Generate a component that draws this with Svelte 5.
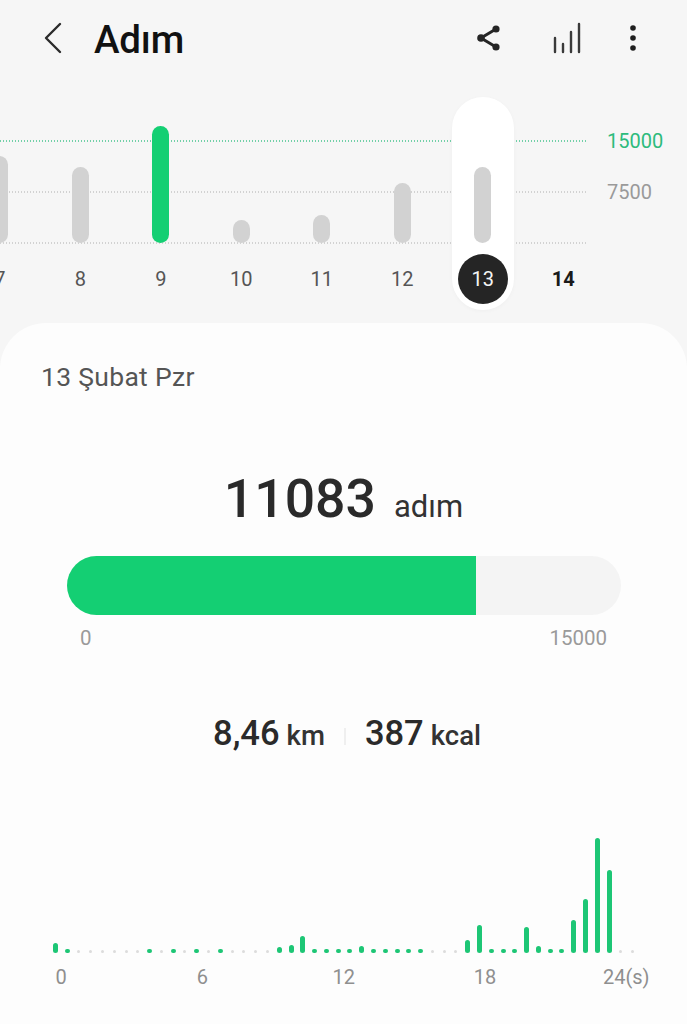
<script lang="ts">
	const days = [
		{ label: 7, height: 87 },
		{ label: 8, height: 76 },
		{ label: 9, height: 117, goal: true },
		{ label: 10, height: 23 },
		{ label: 11, height: 28 },
		{ label: 12, height: 60 },
		{ label: 13, height: 76, selected: true },
		{ label: 14, height: 0, today: true }
	];

	// half-hour bins, 0 means nothing was recorded
	const tall: Record<number, number> = {
		0: 10, 19: 6, 20: 8, 21: 17, 26: 7, 35: 13, 36: 28, 40: 26, 41: 7,
		44: 33, 45: 54, 46: 115, 47: 83
	};
	const small = [1, 8, 10, 12, 14, 22, 23, 24, 25, 27, 28, 29, 30, 31, 37, 38, 39, 42, 43];
	const bins = Array.from({ length: 50 }, (_, i) => tall[i] ?? (small.includes(i) ? 4 : 0));

	const hours = ['0', '6', '12', '18', '24(s)'];
</script>

<div class="page">
	<header class="top">
		<svg class="back" width="20" height="32" viewBox="0 0 20 32" fill="none" stroke="#2b2b2b" stroke-width="2.4" stroke-linecap="round" stroke-linejoin="round">
			<path d="M17 2 3 16l14 14" />
		</svg>
		<h1>Adım</h1>
		<div class="actions">
			<svg class="share" width="28" height="28" viewBox="0 0 28 28" fill="#252525" stroke="#252525">
				<path d="M21 5 6 14l15 9" fill="none" stroke-width="3" />
				<circle cx="21" cy="5" r="3.6" stroke="none" />
				<circle cx="6" cy="14" r="3.8" stroke="none" />
				<circle cx="21" cy="23" r="3.6" stroke="none" />
			</svg>
			<svg width="30" height="32" viewBox="0 0 30 32" fill="none" stroke="#3a3a3a" stroke-width="2.4" stroke-linecap="round">
				<path d="M2 16v14M10 22v8M18 10v20M26 2v28" />
			</svg>
			<svg width="8" height="28" viewBox="0 0 8 28" fill="#1f1f1f">
				<circle cx="4" cy="4" r="2.8" />
				<circle cx="4" cy="14" r="2.8" />
				<circle cx="4" cy="24" r="2.8" />
			</svg>
		</div>
	</header>

	<section class="week">
		<div class="line goal l1"></div>
		<div class="line l2"></div>
		<div class="line l3"></div>
		<span class="axis goal l1">15000</span>
		<span class="axis l2">7500</span>

		<div class="days">
			{#each days as day (day.label)}
				<div class="day" class:today={day.today}>
					{#if day.selected}<span class="pill"></span>{/if}
					<div class="slot">
						{#if day.height}
							<div class="bar" class:goal={day.goal} style="height: {day.height}px"></div>
						{/if}
					</div>
					<span class="num" class:selected={day.selected}>{day.label}</span>
				</div>
			{/each}
		</div>
	</section>

	<main class="card">
		<p class="date">13 Şubat Pzr</p>

		<p class="total"><strong>11083</strong><span>adım</span></p>

		<div class="track"><div class="fill" style="width: {(11083 / 15000) * 100}%"></div></div>
		<div class="scale"><span>0</span><span>15000</span></div>

		<div class="stats">
			<p><strong>8,46</strong><span>km</span></p>
			<i></i>
			<p><strong>387</strong><span>kcal</span></p>
		</div>

		<div class="hist">
			{#each bins as h, i (i)}
				<div class="cell">
					{#if h}
						<div class="tick" style="height: {h}px"></div>
					{:else}
						<div class="dot"></div>
					{/if}
				</div>
			{/each}
		</div>
		<div class="hours">
			{#each hours as hour (hour)}
				<span>{hour}</span>
			{/each}
		</div>
	</main>
</div>

<style>
	:global(body) {
		background: #f6f6f6;
	}

	.page {
		width: 687px;
		height: 1024px;
		overflow: hidden;
		background: #f6f6f6;
		font-family: Roboto, 'Liberation Sans', sans-serif;
		color: #252525;
	}

	.top {
		display: flex;
		align-items: center;
		height: 76px;
		padding: 0 43px;
	}

	.back {
		flex: none;
		margin-right: 31px;
	}

	h1 {
		margin: 2px 0 0;
		font-size: 38.5px;
		font-weight: 500;
		color: #111;
		letter-spacing: -0.2px;
	}

	.actions {
		display: flex;
		align-items: center;
		gap: 46px;
		margin-left: auto;
		margin-right: 7px;
	}

	.share {
		margin-right: 4px;
	}

	.week {
		position: relative;
		height: 247px;
	}

	.line {
		position: absolute;
		left: 0;
		width: 588px;
		height: 2px;
		background: linear-gradient(to right, #d2d2d2 1px, transparent 1px) 0 0 / 3px 100%;
	}

	.line.goal {
		background-image: linear-gradient(to right, #72d0a8 1px, transparent 1px);
	}

	.l1 {
		top: 64px;
	}

	.l2 {
		top: 115px;
	}

	.l3 {
		top: 166px;
	}

	.axis {
		position: absolute;
		left: 607px;
		font-size: 20px;
		line-height: 24px;
		margin-top: -11px;
		color: #9a9a9a;
	}

	.axis.goal {
		color: #2dbb7c;
	}

	.days {
		position: relative;
		display: flex;
		margin-left: -40.5px;
	}

	.day {
		position: relative;
		flex: none;
		width: 80.5px;
		display: flex;
		flex-direction: column;
		align-items: center;
	}

	.pill {
		position: absolute;
		top: 21px;
		left: 9px;
		width: 62px;
		height: 213px;
		border-radius: 31px;
		background: #fff;
		box-shadow: 0 1px 4px rgba(0, 0, 0, 0.03);
	}

	.slot {
		position: relative;
		display: flex;
		align-items: flex-end;
		height: 167px;
	}

	.bar {
		width: 17px;
		border-radius: 9px;
		background: #d2d2d2;
	}

	.bar.goal {
		background: #14cf73;
	}

	.num {
		position: relative;
		display: flex;
		align-items: center;
		justify-content: center;
		width: 50px;
		height: 50px;
		margin-top: 11px;
		font-size: 20px;
		color: #555;
	}

	.num.selected {
		border-radius: 50%;
		background: #252525;
		color: #f5f5f5;
	}

	.today .num {
		font-weight: 700;
		color: #1a1a1a;
	}

	.card {
		height: 701px;
		border-radius: 46px 46px 0 0;
		background: #fdfdfd;
		overflow: hidden;
	}

	.date {
		margin: 39px 0 0 41px;
		font-size: 26.5px;
		letter-spacing: 0.3px;
		line-height: 30px;
		color: #555;
	}

	.total {
		display: flex;
		justify-content: center;
		align-items: baseline;
		gap: 18px;
		margin: 76px 0 0;
		line-height: 62px;
	}

	.total strong {
		font-size: 53.5px;
		font-weight: 500;
		color: #2a2a2a;
	}

	.total span {
		font-size: 31px;
		color: #333;
	}

	.track {
		width: 554px;
		height: 59px;
		margin: 18px 0 0 67px;
		border-radius: 30px;
		background: #f4f4f4;
		overflow: hidden;
	}

	.fill {
		height: 100%;
		background: #14cf73;
	}

	.scale {
		display: flex;
		justify-content: space-between;
		width: 527px;
		margin: 11px 0 0 80px;
		font-size: 20.5px;
		line-height: 24px;
		color: #9a9a9a;
	}

	.stats {
		display: flex;
		justify-content: center;
		align-items: center;
		gap: 19px;
		margin-top: 63px;
		padding-left: 7px;
		line-height: 40px;
	}

	.stats p {
		margin: 0;
	}

	.stats strong {
		font-size: 34.5px;
		font-weight: 500;
		color: #2a2a2a;
	}

	.stats span {
		margin-left: 7px;
		font-size: 27.5px;
		font-weight: 500;
		color: #333;
	}

	.stats i {
		width: 2px;
		height: 17px;
		background: #efefef;
	}

	.hist {
		display: flex;
		align-items: flex-end;
		height: 120px;
		margin: 73px 0 0 49.5px;
	}

	.cell {
		flex: none;
		width: 11.79px;
		display: flex;
		justify-content: center;
	}

	.tick {
		width: 5px;
		border-radius: 3px;
		background: #1dc675;
	}

	.dot {
		width: 3px;
		height: 3px;
		margin-bottom: 0.5px;
		border-radius: 50%;
		background: #dcdcdc;
	}

	.hours {
		display: grid;
		grid-template-columns: repeat(5, 141.3px);
		justify-items: center;
		margin: 12px 0 0 -9.6px;
		font-size: 20px;
		line-height: 24px;
		color: #8f8f8f;
	}
</style>
